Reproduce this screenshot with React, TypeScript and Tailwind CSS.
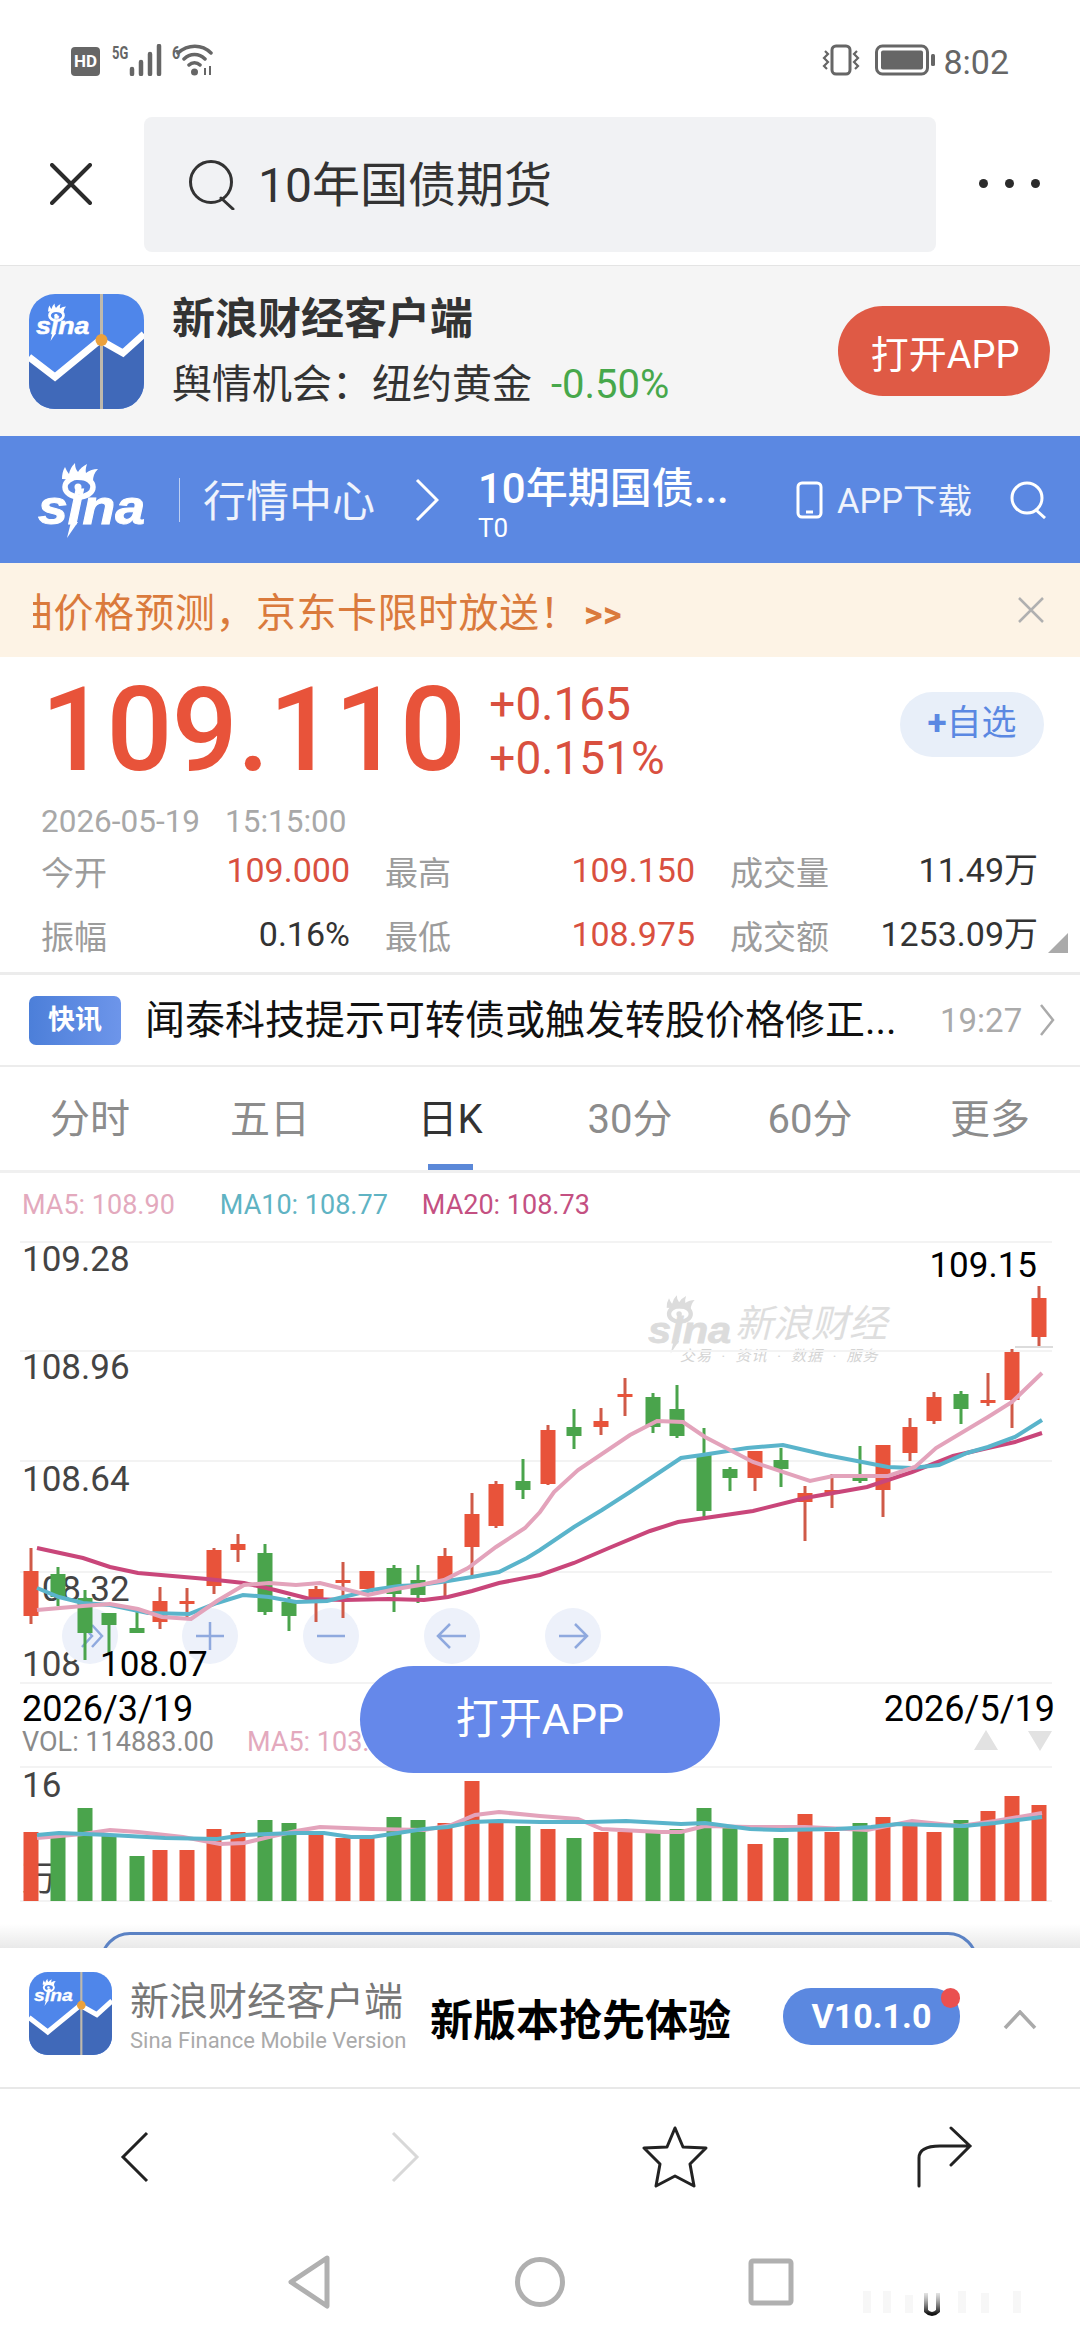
import React from 'react';

const RED = '#e8533a';
const GREEN = '#4aa44c';

// x, wick top, wick bottom, body top, body bottom, up?, volume top
const candles: [number, number, number, number, number, boolean, number][] = [
  [31, 1548, 1624, 1571, 1616, true, 1832],
  [58, 1567, 1606, 1574, 1597, false, 1835],
  [85, 1590, 1660, 1598, 1633, false, 1808],
  [109, 1613, 1655, 1613, 1625, false, 1835],
  [137, 1611, 1633, 1628, 1633, false, 1856],
  [160, 1587, 1629, 1601, 1622, true, 1850],
  [187, 1588, 1620, 1601, 1604, true, 1850],
  [214, 1548, 1594, 1550, 1586, true, 1829],
  [238, 1534, 1562, 1544, 1550, true, 1832],
  [265, 1544, 1615, 1553, 1612, false, 1820],
  [289, 1597, 1631, 1602, 1616, false, 1823],
  [316, 1586, 1622, 1589, 1603, true, 1833],
  [343, 1562, 1618, 1580, 1583, true, 1838],
  [367, 1571, 1589, 1571, 1589, true, 1838],
  [394, 1565, 1612, 1568, 1594, false, 1817],
  [418, 1565, 1603, 1580, 1595, false, 1820],
  [445, 1548, 1598, 1556, 1580, true, 1823],
  [472, 1493, 1577, 1514, 1547, true, 1781],
  [496, 1481, 1528, 1484, 1526, true, 1822],
  [523, 1459, 1499, 1481, 1490, false, 1826],
  [548, 1425, 1485, 1430, 1484, true, 1829],
  [574, 1409, 1449, 1427, 1436, false, 1838],
  [601, 1408, 1435, 1421, 1427, true, 1832],
  [625, 1378, 1416, 1394, 1397, true, 1832],
  [653, 1393, 1433, 1397, 1427, false, 1832],
  [677, 1385, 1438, 1409, 1436, false, 1829],
  [704, 1428, 1517, 1454, 1511, false, 1808],
  [730, 1467, 1491, 1469, 1478, false, 1827],
  [755, 1451, 1491, 1451, 1478, true, 1844],
  [781, 1448, 1487, 1460, 1469, false, 1838],
  [805, 1486, 1541, 1493, 1502, true, 1814],
  [832, 1474, 1508, 1490, 1494, true, 1832],
  [860, 1446, 1483, 1477, 1481, false, 1823],
  [883, 1445, 1517, 1445, 1490, true, 1817],
  [910, 1418, 1461, 1427, 1453, true, 1823],
  [934, 1392, 1424, 1397, 1421, true, 1832],
  [961, 1391, 1424, 1394, 1409, false, 1820],
  [988, 1373, 1406, 1400, 1403, true, 1811],
  [1012, 1349, 1428, 1352, 1400, true, 1796],
  [1039, 1286, 1347, 1298, 1337, true, 1805],
];

const ma20 = '37,1548 83,1558 110,1567 138,1573 207,1579 244,1583 275,1590 310,1599 344,1600 389,1599 424,1600 448,1597 472,1591 499,1583 540,1575 574,1563 609,1548 650,1531 678,1522 705,1518 753,1511 805,1498 867,1487 912,1472 953,1456 988,1448 1015,1442 1042,1433';
const ma10 = '37,1588 59,1597 83,1603 110,1605 148,1613 189,1614 217,1603 243,1595 269,1597 296,1602 327,1601 372,1590 399,1586 420,1585 448,1581 472,1577 499,1572 527,1558 540,1550 574,1527 602,1510 630,1492 681,1458 702,1455 747,1448 783,1445 826,1455 888,1467 912,1468 939,1465 967,1453 988,1447 1015,1437 1042,1420';
const ma5 = '37,1610 83,1606 110,1604 138,1609 162,1617 191,1619 217,1601 244,1585 269,1583 296,1585 320,1583 344,1589 368,1595 396,1589 420,1585 444,1580 468,1568 496,1547 525,1528 540,1512 554,1492 578,1470 630,1435 657,1421 683,1422 705,1437 753,1462 810,1481 833,1476 888,1476 915,1467 936,1448 988,1417 1012,1402 1042,1373';
const volMa10 = '37,1835 59,1833 110,1835 165,1838 217,1839 244,1835 296,1833 324,1833 351,1837 372,1837 424,1829 448,1827 472,1822 499,1821 540,1822 588,1822 626,1821 681,1824 705,1823 750,1829 781,1830 836,1829 871,1827 898,1824 964,1826 995,1823 1042,1817';
const volMa5 = '37,1838 83,1834 110,1830 138,1832 183,1837 220,1844 244,1843 269,1837 296,1831 320,1827 372,1829 424,1830 451,1825 475,1815 499,1812 540,1816 578,1819 602,1829 640,1831 661,1832 681,1832 705,1826 750,1827 805,1827 867,1830 912,1821 960,1826 995,1821 1042,1813';

function SinaMark({ color }: { color: string }) {
  return (
    <>
      <ellipse cx="41" cy="25" rx="14" ry="10" fill="none" stroke={color} strokeWidth="5.500" />
      <circle cx="40" cy="25" r="3.500" fill={color} />
      <path d="M24 17 Q24 10 27 5 Q29 10 31 12 Q32 6 37 1 Q37 7 40 10 Q43 5 49 2 Q47 8 48 11 Q53 7 60 7 Q55 12 55 19 Z" fill={color} />
      <text x="0" y="62" fontFamily="'Liberation Sans', sans-serif" fontWeight="700" fontStyle="italic" fontSize="48" fill={color} stroke={color} strokeWidth="1" textLength="107" lengthAdjust="spacingAndGlyphs">
        sina
      </text>
      <path d="M33 60 L40 60 L29 76 Z" fill={color} />
    </>
  );
}

function SinaLogo({ color, className }: { color: string; className: string }) {
  return (
    <svg viewBox="0 0 108 76" className={className}>
      <SinaMark color={color} />
    </svg>
  );
}

function AppIcon({ className }: { className: string }) {
  return (
    <svg viewBox="0 0 115 115" className={className}>
      <rect width="115" height="115" rx="26" fill="#4f86ea" />
      <path d="M0 63 L26 83 L71 46 L94 59 L115 38 V89 A26 26 0 0 1 89 115 H26 A26 26 0 0 1 0 89 Z" fill="#4069b9" />
      <path d="M0 63 L26 83 L71 46 L94 59 L115 40" fill="none" stroke="#fff" strokeWidth="7" />
      <path d="M72.500 0 V115" stroke="#bfb9ac" strokeWidth="3" />
      <circle cx="72.500" cy="46" r="6" fill="#eba13c" />
      <g transform="translate(7 9) scale(0.5)">
        <SinaMark color="#fff" />
      </g>
    </svg>
  );
}

function StatusBar() {
  return (
    <div className="h-[100px] flex justify-between items-start pt-[44px] pl-[71px] pr-[71px] text-[#666]">
      <div className="flex items-start">
        <div className="w-[29px] h-[29px] mt-[3px] rounded-[4px] bg-[#666] text-white text-[17px] font-bold leading-[29px] text-center">HD</div>
        <span className="ml-[12px] text-[19px] font-bold leading-[18px] w-[17px] scale-x-[0.68] origin-left">5G</span>
        <svg viewBox="0 0 34 32" className="w-[34px] h-[32px]">
          <path d="M3 25 V30 M12 18 V30 M21 10 V30 M30 2 V30" stroke="#666" strokeWidth="4.500" strokeLinecap="round" />
        </svg>
        <span className="ml-[9px] text-[19px] font-bold leading-[18px] w-[9px] scale-x-[0.75] origin-left">6</span>
        <svg viewBox="0 0 40 32" className="w-[40px] h-[32px] -ml-[5px]">
          <path d="M2 9 C12 0 26 0 35 9 M8 15 C14 9 23 9 29 15 M13 21 C16 18 21 18 24 21" fill="none" stroke="#666" strokeWidth="3.500" strokeLinecap="round" />
          <circle cx="18.500" cy="28" r="3.500" fill="#666" />
          <path d="M29 24 V31 M34 22 V31" stroke="#666" strokeWidth="2" />
        </svg>
      </div>
      <div className="flex items-start">
        <svg viewBox="0 0 38 32" className="w-[38px] h-[32px]">
          <rect x="10" y="2" width="18" height="28" rx="4" fill="none" stroke="#666" strokeWidth="3" />
          <path d="M3 7 L6 10 L2 14 L6 18 L2 22 L5 25 M35 7 L32 10 L36 14 L32 18 L36 22 L33 25" fill="none" stroke="#666" strokeWidth="2.200" />
        </svg>
        <svg viewBox="0 0 62 32" className="w-[62px] h-[32px] ml-[15px]">
          <rect x="1.500" y="2" width="51" height="28" rx="6" fill="none" stroke="#666" strokeWidth="3" />
          <rect x="6" y="6.500" width="42" height="19" rx="2" fill="#666" />
          <rect x="56" y="10" width="4" height="12" rx="1.500" fill="#666" />
        </svg>
        <span className="ml-[6px] text-[34px] leading-[36px]">8:02</span>
      </div>
    </div>
  );
}

function SearchBar() {
  return (
    <div className="h-[166px] flex items-start border-b border-[#e4e4e4]">
      <svg viewBox="0 0 42 42" className="w-[42px] h-[42px] ml-[50px] mt-[63px]">
        <path d="M2 2 L40 40 M40 2 L2 40" stroke="#2b2b2b" strokeWidth="4" strokeLinecap="round" />
      </svg>
      <div className="w-[792px] h-[135px] ml-[52px] mt-[17px] rounded-[8px] bg-[#f1f2f4] flex items-center">
        <svg viewBox="0 0 48 50" className="w-[48px] h-[50px] ml-[44px]">
          <circle cx="23" cy="22" r="20.500" fill="none" stroke="#333" strokeWidth="3" />
          <path d="M33 38 L45 49" stroke="#333" strokeWidth="3" strokeLinecap="round" />
        </svg>
        <span className="ml-[22px] mt-[2px] text-[48px] leading-none text-[#333]">10年国债期货</span>
      </div>
      <div className="ml-[43px] mt-[79px] flex gap-[17px]">
        <span className="w-[9px] h-[9px] rounded-full bg-[#2b2b2b]" />
        <span className="w-[9px] h-[9px] rounded-full bg-[#2b2b2b]" />
        <span className="w-[9px] h-[9px] rounded-full bg-[#2b2b2b]" />
      </div>
    </div>
  );
}

function AppBanner() {
  return (
    <div className="h-[170px] bg-[#f5f5f5] flex items-center pl-[29px]">
      <AppIcon className="w-[115px] h-[115px] shrink-0" />
      <div className="ml-[28px] w-[666px]">
        <div className="text-[43px] leading-[50px] font-bold text-[#333]">新浪财经客户端</div>
        <div className="mt-[18px] text-[40px] leading-[46px] text-[#333] whitespace-nowrap">
          舆情机会：纽约黄金<span className="ml-[19px] text-[40px] text-[#47a84b]">-0.50%</span>
        </div>
      </div>
      <div className="w-[212px] h-[90px] rounded-[45px] bg-[#df5a45] text-white text-[38px] pt-[9px] pl-[2px] flex items-center justify-center">打开APP</div>
    </div>
  );
}

function NavBar() {
  return (
    <div className="h-[127px] bg-[#5b88e2] flex items-center text-white">
      <SinaLogo color="#fff" className="w-[108px] h-[76px] ml-[38px]" />
      <div className="w-[1px] h-[44px] bg-white/60 ml-[33px]" />
      <span className="ml-[23px] mt-[5px] text-[43px] leading-none text-white/90 whitespace-nowrap">行情中心</span>
      <svg viewBox="0 0 24 44" className="w-[24px] h-[44px] ml-[40px]">
        <path d="M2 2 L22 22 L2 42" fill="none" stroke="#fff" strokeWidth="3" />
      </svg>
      <div className="ml-[39px] w-[252px] flex flex-col mt-[8px]">
        <span className="text-[42px] leading-[46px] font-medium whitespace-nowrap">10年期国债...</span>
        <span className="text-[26px] leading-[28px] mt-[2px]">T0</span>
      </div>
      <svg viewBox="0 0 27 38" className="w-[27px] h-[38px] ml-[66px]">
        <rect x="2" y="2" width="23" height="34" rx="4" fill="none" stroke="#fff" strokeWidth="3" />
        <path d="M10 31 H17" stroke="#fff" strokeWidth="3" />
      </svg>
      <span className="ml-[14px] mt-[3px] text-[34.500px] leading-none text-white/90 whitespace-nowrap">APP下载</span>
      <svg viewBox="0 0 40 38" className="w-[40px] h-[38px] ml-[36px]">
        <circle cx="19" cy="17" r="15" fill="none" stroke="#fff" strokeWidth="3" />
        <path d="M28 29 L37 37" stroke="#fff" strokeWidth="3" />
      </svg>
    </div>
  );
}

function NoticeStrip() {
  return (
    <div className="h-[94px] bg-[#fdf3e5] flex items-center justify-between pr-[36px]">
      <div className="w-[640px] ml-[33px] mt-[9px] overflow-hidden whitespace-nowrap text-[40px] tracking-[0.500px] leading-[48px] text-[#da7a3c]">
        <span className="-ml-[20px]">油价格预测，京东卡限时放送！</span>
        <span className="ml-[4px] font-bold text-[36px]">&gt;&gt;</span>
      </div>
      <svg viewBox="0 0 26 26" className="w-[26px] h-[26px] -mt-[1px]">
        <path d="M1 1 L25 25 M25 1 L1 25" stroke="#b0b0b0" strokeWidth="2.500" />
      </svg>
    </div>
  );
}

function Stat({ label, value, valueClass }: { label: string; value: string; valueClass: string }) {
  return (
    <div className="flex justify-between items-start">
      <span className="text-[33px] leading-[40px] mt-[4px] text-[#9c9c9c]">{label}</span>
      <span className={`text-[34px] leading-[40px] ${valueClass}`}>{value}</span>
    </div>
  );
}

function Quote() {
  return (
    <div className="relative h-[318px] border-b-[3px] border-[#ececec]">
      <div className="flex items-start pl-[41px] pt-[8px]">
        <span className="text-[116px] leading-[130px] font-medium text-[#e8533a] tracking-[-0.500px]">109.110</span>
        <div className="ml-[24px] mt-[12px] text-[46px] leading-[54px] text-[#d9503f]">
          <div>+0.165</div>
          <div>+0.151%</div>
        </div>
        <div className="absolute left-[900px] top-[35px] w-[144px] h-[65px] rounded-[33px] bg-[#e8eff9] flex items-center justify-center text-[35px] text-[#5b88e2]">
          <span className="font-bold">+</span>自选
        </div>
      </div>
      <div className="pl-[41px] mt-[9px] text-[31.500px] leading-[36px] text-[#a8a8a8] flex gap-[25px]">
        <span>2026-05-19</span>
        <span>15:15:00</span>
      </div>
      <div className="ml-[41px] w-[997px] mt-[10px] grid grid-cols-[309px_310px_308px] gap-x-[35px] gap-y-[20px]">
        <Stat label="今开" value="109.000" valueClass="text-[#d9503f]" />
        <Stat label="最高" value="109.150" valueClass="text-[#d9503f]" />
        <Stat label="成交量" value="11.49万" valueClass="text-[#333]" />
        <Stat label="振幅" value="0.16%" valueClass="text-[#333]" />
        <Stat label="最低" value="108.975" valueClass="text-[#d9503f]" />
        <Stat label="成交额" value="1253.09万" valueClass="text-[#333]" />
      </div>
      <svg viewBox="0 0 20 20" className="absolute left-[1048px] top-[276px] w-[20px] h-[20px]">
        <path d="M20 0 V20 H0 Z" fill="#aaa" />
      </svg>
    </div>
  );
}

function NewsRow() {
  return (
    <div className="h-[92px] flex items-center border-b-[2px] border-[#ececec] pl-[29px]">
      <div className="w-[92px] h-[49px] rounded-[7px] bg-gradient-to-r from-[#4c7fd9] to-[#6d95ea] text-white text-[27px] font-bold flex items-center justify-center">快讯</div>
      <span className="ml-[24px] mt-[2px] w-[760px] text-[40px] leading-[48px] text-[#111] whitespace-nowrap">闻泰科技提示可转债或触发转股价格修正...</span>
      <span className="ml-[35px] text-[33px] leading-none text-[#aaa]">19:27</span>
      <svg viewBox="0 0 16 34" className="w-[16px] h-[34px] ml-[17px]">
        <path d="M2 2 L14 17 L2 32" fill="none" stroke="#aaa" strokeWidth="2.500" />
      </svg>
    </div>
  );
}

function Tabs() {
  const tabs = ['分时', '五日', '日K', '30分', '60分', '更多'];
  return (
    <div className="h-[106px] grid grid-cols-6 border-b-[3px] border-[#f0f0f0]">
      {tabs.map((t) => (
        <div key={t} className={`relative flex items-center justify-center pt-[2px] text-[40px] leading-none ${t === '日K' ? 'text-[#333]' : 'text-[#8c8c8c]'}`}>
          {t}
          {t === '日K' && <span className="absolute bottom-[0px] left-[68px] w-[45px] h-[6px] bg-[#5b88d8]" />}
        </div>
      ))}
    </div>
  );
}

function ChartArt() {
  return (
    <svg viewBox="0 1173 1080 775" className="absolute inset-0 w-[1080px] h-[775px]">
      {[1242, 1351, 1461, 1572, 1683, 1767, 1901].map((y) => (
        <path key={y} d={`M20 ${y} H1052`} stroke="#f3f3f3" strokeWidth="2" />
      ))}
      {candles.map(([x, wt, wb, bt, bb, up]) => (
        <g key={x} fill={up ? RED : GREEN}>
          <rect x={x - 1.500} y={wt} width="3" height={wb - wt} fill={up ? '#cf5a48' : GREEN} />
          <rect x={x - 7.500} y={bt} width="15" height={bb - bt} />
        </g>
      ))}
      <path d="M1015 1347 H1053" stroke="#dcdcdc" strokeWidth="2" />
      <polyline points={ma20} fill="none" stroke="#c9467a" strokeWidth="4" />
      <polyline points={ma10} fill="none" stroke="#5ab4cb" strokeWidth="4" />
      <polyline points={ma5} fill="none" stroke="#e3a3bb" strokeWidth="4" />
      {candles.map(([x, , , , , up, v]) => (
        <rect key={x} x={x - 7.500} y={v} width="15" height={1901 - v} fill={up ? RED : GREEN} />
      ))}
      <polyline points={volMa5} fill="none" stroke="#e3a3bb" strokeWidth="4" />
      <polyline points={volMa10} fill="none" stroke="#5ab4cb" strokeWidth="4" />
      <path d="M974 1750 L986 1730 L998 1750 Z M1028 1731 H1052 L1040 1751 Z" fill="#e2e2e2" />
    </svg>
  );
}

function ChartButton({ left, children }: { left: string; children: React.ReactNode }) {
  return (
    <div className={`absolute top-[435px] ${left} w-[56px] h-[56px] rounded-full bg-[#edf1fa]`}>
      <svg viewBox="0 0 56 56" className="w-[56px] h-[56px]">{children}</svg>
    </div>
  );
}

function Chart() {
  const blue = { fill: 'none', stroke: '#8fa9de', strokeWidth: 2.5 };
  return (
    <div className="relative h-[775px] overflow-hidden leading-none">
      <div className="absolute left-[22px] top-[19px] flex text-[27px]">
        <span className="text-[#e3a9bd]">MA5: 108.90</span>
        <span className="ml-[45px] text-[#5fb3c3]">MA10: 108.77</span>
        <span className="ml-[34px] text-[#c45082]">MA20: 108.73</span>
      </div>
      <span className="absolute left-[22px] top-[69px] text-[35px] text-[#444]">109.28</span>
      <span className="absolute left-[22px] top-[177px] text-[35px] text-[#444]">108.96</span>
      <span className="absolute left-[22px] top-[289px] text-[35px] text-[#444]">108.64</span>
      <span className="absolute left-[22px] top-[399px] text-[35px] text-[#444]">108.32</span>
      <span className="absolute left-[22px] top-[474px] text-[35px] text-[#444]">108</span>
      <span className="absolute left-[22px] top-[595px] text-[35px] text-[#444]">16</span>
      <span className="absolute left-[22px] top-[689px] text-[35px] text-[#444]">万</span>

      <div className="absolute left-[648px] top-[120px] w-[240px] h-[72px] flex text-[#dedede]">
        <SinaLogo color="#dcdcdc" className="w-[84px] h-[62px] shrink-0" />
        <div className="ml-[3px]">
          <div className="text-[38px] italic whitespace-nowrap mt-[12px]">新浪财经</div>
          <div className="text-[15px] italic whitespace-nowrap mt-[6px] -ml-[55px] tracking-[1px] text-[#d4d4d4]">交易 &nbsp;·&nbsp; 资讯 &nbsp;·&nbsp; 数据 &nbsp;·&nbsp; 服务</div>
        </div>
      </div>

      <ChartButton left="left-[62px]">
        <path d="M20 17 L30 28 L20 39 M30 17 L40 28 L30 39" {...blue} />
      </ChartButton>
      <ChartButton left="left-[182px]">
        <path d="M14 28 H42 M28 14 V42" {...blue} />
      </ChartButton>
      <ChartButton left="left-[303px]">
        <path d="M14 28 H42" {...blue} />
      </ChartButton>
      <ChartButton left="left-[424px]">
        <path d="M42 28 H14 M26 16 L14 28 L26 40" {...blue} />
      </ChartButton>
      <ChartButton left="left-[545px]">
        <path d="M14 28 H42 M30 16 L42 28 L30 40" {...blue} />
      </ChartButton>

      <ChartArt />

      <span className="absolute left-[100px] top-[474px] text-[35px] text-black">108.07</span>
      <span className="absolute right-[43px] top-[75px] text-[35px] text-black">109.15</span>
      <span className="absolute left-[22px] top-[518px] text-[36px] text-black">2026/3/19</span>
      <span className="absolute right-[25px] top-[518px] text-[36px] text-black">2026/5/19</span>
      <span className="absolute left-[22px] top-[556px] text-[27px] text-[#8a8a8a]">VOL: 114883.00</span>
      <span className="absolute left-[247px] top-[556px] text-[27px] text-[#e3a9bd]">MA5: 103...</span>

      <div className="absolute left-[360px] top-[493px] w-[360px] h-[107px] rounded-[54px] bg-[#6588ea] text-white text-[43px] flex items-center justify-center">打开APP</div>

      <div className="absolute inset-x-0 bottom-0 h-[24px] bg-gradient-to-b from-white to-[#e9e9e9]" />
      <div className="absolute left-[100px] top-[759px] w-[878px] h-[60px] rounded-[40px] border-[3px] border-[#5b82c4]" />
    </div>
  );
}

function DownloadSheet() {
  return (
    <div className="h-[141px] flex items-center border-b-[2px] border-[#e8e8e8] pl-[29px]">
      <AppIcon className="w-[83px] h-[85px] shrink-0 -mt-[8px]" />
      <div className="ml-[18px] w-[300px] -mt-[2px]">
        <div className="text-[39px] leading-[46px] text-[#777] whitespace-nowrap">新浪财经客户端</div>
        <div className="text-[22px] leading-[28px] mt-[2px] text-[#aaa] whitespace-nowrap">Sina Finance Mobile Version</div>
      </div>
      <span className="text-[43px] leading-none font-bold text-black whitespace-nowrap mt-[8px]">新版本抢先体验</span>
      <div className="relative ml-[52px] -mt-[2px] w-[177px] h-[57px] rounded-[28px] bg-[#5b88e0] text-white text-[34px] font-bold flex items-center justify-center">
        V10.1.0
        <span className="absolute right-[0px] top-[0px] w-[19px] h-[20px] rounded-full bg-[#ea5050]" />
      </div>
      <svg viewBox="0 0 34 20" className="w-[34px] h-[20px] ml-[43px] mt-[4px]">
        <path d="M2 18 L17 2 L32 18" fill="none" stroke="#aaa" strokeWidth="3.500" />
      </svg>
    </div>
  );
}

function BrowserToolbar() {
  return (
    <div className="h-[130px] grid grid-cols-4 place-items-center pt-[6px]">
      <svg viewBox="0 0 30 52" className="w-[30px] h-[52px]">
        <path d="M27 2 L3 26 L27 50" fill="none" stroke="#222" strokeWidth="3" />
      </svg>
      <svg viewBox="0 0 30 52" className="w-[30px] h-[52px]">
        <path d="M3 2 L27 26 L3 50" fill="none" stroke="#d8d8d8" strokeWidth="3" />
      </svg>
      <svg viewBox="0 0 66 62" className="w-[66px] h-[62px]">
        <path d="M33 2 L41 21 L64 22 L48 38 L52 60 L33 50 L14 60 L18 38 L2 22 L25 21 Z" fill="none" stroke="#222" strokeWidth="3" strokeLinejoin="round" />
      </svg>
      <svg viewBox="0 0 58 62" className="w-[58px] h-[62px]">
        <path d="M3 60 V32 Q3 20 24 20 H54 M35 2 L54 20 L35 39" fill="none" stroke="#222" strokeWidth="3" strokeLinecap="round" />
      </svg>
    </div>
  );
}

function SystemNav() {
  return (
    <div className="relative flex-1 flex justify-center items-start pt-[36px]">
      <div className="w-[231px] flex justify-center">
        <svg viewBox="0 0 44 54" className="w-[44px] h-[54px]">
          <path d="M40 3 L4 27 L40 51 Z" fill="none" stroke="#b0b0b0" strokeWidth="5" strokeLinejoin="round" />
        </svg>
      </div>
      <div className="w-[231px] flex justify-center">
        <svg viewBox="0 0 54 54" className="w-[54px] h-[54px]">
          <circle cx="27" cy="27" r="22.500" fill="none" stroke="#b0b0b0" strokeWidth="5" />
        </svg>
      </div>
      <div className="w-[231px] flex justify-center">
        <svg viewBox="0 0 46 48" className="w-[46px] h-[48px] mt-[3px]">
          <rect x="3" y="3" width="40" height="42" rx="2" fill="none" stroke="#b0b0b0" strokeWidth="5" />
        </svg>
      </div>
      {/* blurred leftover of a watermark, bottom right */}
      <svg viewBox="0 0 190 30" className="absolute left-[857px] top-[68px] w-[190px] h-[30px]">
        <defs>
          <linearGradient id="fade" x1="0" y1="0" x2="0" y2="1">
            <stop offset="0" stopColor="#777" stopOpacity="0.2" />
            <stop offset="1" stopColor="#111" />
          </linearGradient>
        </defs>
        <path d="M10 4 V26 M30 4 V26 M52 8 V26 M105 4 V26 M128 6 V26 M160 4 V26" stroke="#f7f7f7" strokeWidth="8" />
        <path d="M69 6 V24 Q75 30 81 24 V6" fill="none" stroke="url(#fade)" strokeWidth="4" />
      </svg>
    </div>
  );
}

export default function App() {
  return (
    <div className="w-[1080px] h-[2340px] bg-white flex flex-col overflow-hidden font-[Roboto,'Noto_Sans_CJK_SC',sans-serif]">
      <StatusBar />
      <SearchBar />
      <AppBanner />
      <NavBar />
      <NoticeStrip />
      <Quote />
      <NewsRow />
      <Tabs />
      <Chart />
      <DownloadSheet />
      <BrowserToolbar />
      <SystemNav />
    </div>
  );
}
